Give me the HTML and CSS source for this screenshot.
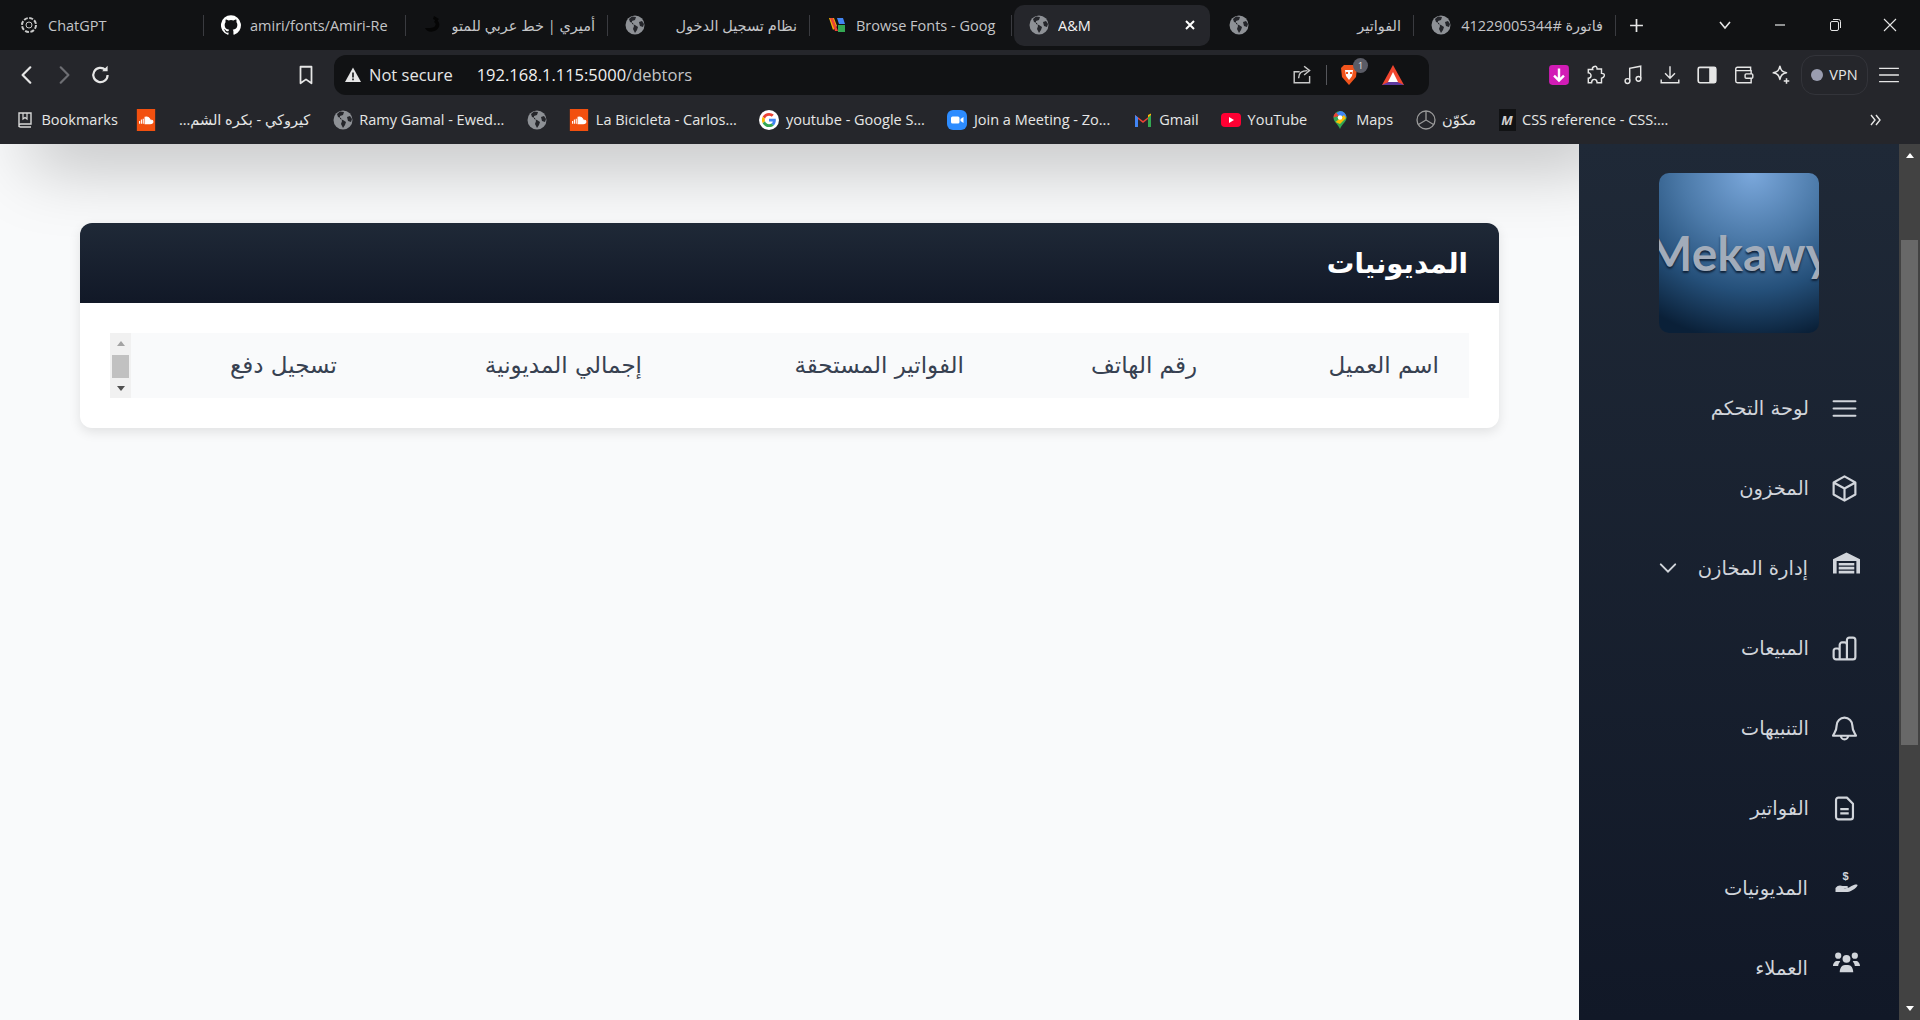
FILE: index.html
```html
<!DOCTYPE html>
<html lang="ar">
<head>
  <meta charset="UTF-8">
  <title>A&amp;M</title>
  <link rel="stylesheet" href="styles.css">
</head>
<body>
  <svg class="defs" width="0" height="0">
    <symbol id="globe" viewBox="0 0 20 20">
      <circle cx="10" cy="10" r="9.500" fill="#8e9196"/>
      <path d="M7 1.500 4 4l1 3 3 1 1 3-1 3 2 4 2-3 1-3-3-2-3-1V6l3-1 1-3zM14 7l3-1 2 3-1 3-3-1z" fill="#25262b"/>
    </symbol>
    <symbol id="cloud" viewBox="0 0 20 24">
      <rect width="20" height="24" fill="#f2500f"/>
      <path d="M3 16v-3M5 16v-4.500M7 16v-5.500M9 16V9c3-1 5 1 5.500 3 2 0 3 1 3 2s-1 2-3 2z" stroke="#fff" stroke-width="1.200" fill="#fff"/>
    </symbol>
  </svg>

  <header class="browser">
    <div class="tabstrip">
      <div class="tab">
        <svg class="fav" viewBox="0 0 20 20"><circle cx="10" cy="10" r="7" fill="none" stroke="#c8c8c8" stroke-width="2" stroke-dasharray="4 1.500"/><circle cx="10" cy="10" r="3" fill="none" stroke="#c8c8c8"/></svg>
        <span class="tab-title">ChatGPT</span>
      </div>
      <div class="tab">
        <svg class="fav" viewBox="0 0 24 24"><path fill="#fff" d="M12 .3a12 12 0 0 0-3.800 23.400c.6.100.8-.3.8-.6v-2c-3.300.7-4-1.600-4-1.600-.5-1.400-1.300-1.800-1.300-1.800-1.100-.7.1-.7.1-.7 1.200.1 1.800 1.200 1.800 1.200 1.100 1.800 2.800 1.300 3.500 1 .1-.8.4-1.300.8-1.600-2.700-.3-5.500-1.300-5.500-5.900 0-1.300.5-2.400 1.200-3.200-.1-.3-.5-1.500.1-3.200 0 0 1-.3 3.300 1.200a11.500 11.500 0 0 1 6 0c2.300-1.500 3.300-1.200 3.300-1.200.6 1.700.2 2.900.1 3.200.8.8 1.200 1.900 1.200 3.200 0 4.600-2.800 5.600-5.500 5.900.4.4.8 1.100.8 2.200v3.300c0 .3.2.7.8.6A12 12 0 0 0 12 .3z"/></svg>
        <span class="tab-title">amiri/fonts/Amiri-Re</span>
      </div>
      <div class="tab">
        <svg class="fav" viewBox="0 0 20 20"><path d="M2 13c2 5 11 5 14-1 1-3 0-6-3-8l-2 3c2 1 2 3 1 4-1 2-5 2-10 2z" fill="#050505"/><path d="M11 1l5 3-2 2-4-2z" fill="#050505"/></svg>
        <span class="tab-title rtl">أميري | خط عربي للمتو</span>
      </div>
      <div class="tab">
        <svg class="fav"><use href="#globe"/></svg>
        <span class="tab-title rtl">نظام تسجيل الدخول</span>
      </div>
      <div class="tab">
        <svg class="fav" viewBox="0 0 20 20"><path d="M2 3h5l3 8-4 4z" fill="#f4b400"/><path d="M3 3h3l5 13H8z" fill="#ea4335"/><path d="M10 3h6l2 6h-6z" fill="#4285f4"/><path d="M11 10h7v7h-7z" fill="#34a853"/></svg>
        <span class="tab-title">Browse Fonts - Goog</span>
      </div>
      <div class="tab tab-active">
        <svg class="fav"><use href="#globe"/></svg>
        <span class="tab-title">A&amp;M</span>
        <svg class="tab-close" viewBox="0 0 12 12"><path d="M2 2l8 8M10 2l-8 8" stroke="#fff" stroke-width="2"/></svg>
      </div>
      <div class="tab">
        <svg class="fav"><use href="#globe"/></svg>
        <span class="tab-title rtl">الفواتير</span>
      </div>
      <div class="tab">
        <svg class="fav"><use href="#globe"/></svg>
        <span class="tab-title rtl">فاتورة #41229005344</span>
      </div>
      <svg class="newtab" viewBox="0 0 14 14"><path d="M7 1v12M1 7h12" stroke="#e6e6e6" stroke-width="1.600"/></svg>
      <div class="winbtns">
        <svg class="winbtn" viewBox="0 0 14 14"><path d="M2 4l5 6 5-6" fill="none" stroke="#e6e6e6" stroke-width="1.600"/></svg>
        <svg class="winbtn" viewBox="0 0 14 14"><path d="M2 7h10" stroke="#e6e6e6" stroke-width="1.200"/></svg>
        <svg class="winbtn" viewBox="0 0 14 14"><rect x="2.500" y="3.500" width="8" height="9" rx="1.500" fill="none" stroke="#e6e6e6"/><path d="M5 1.500h5.500a2 2 0 0 1 2 2V10" fill="none" stroke="#e6e6e6"/></svg>
        <svg class="winbtn" viewBox="0 0 14 14"><path d="M1 1l12 12M13 1L1 13" stroke="#e6e6e6" stroke-width="1.100"/></svg>
      </div>
    </div>

    <div class="toolbar">
      <svg class="nav-ic" viewBox="0 0 20 20"><path d="M13 3l-7 7 7 7" fill="none" stroke="#e6e6e6" stroke-width="2" stroke-linecap="round" stroke-linejoin="round"/></svg>
      <svg class="nav-ic" viewBox="0 0 20 20"><path d="M7 3l7 7-7 7" fill="none" stroke="#6d6e73" stroke-width="2" stroke-linecap="round" stroke-linejoin="round"/></svg>
      <svg class="nav-ic" viewBox="0 0 20 20"><path d="M16 10a6.500 6.500 0 1 1-2-4.700" fill="none" stroke="#e6e6e6" stroke-width="2"/><path d="M11 6.500h5v-5z" fill="#e6e6e6"/></svg>
      <svg class="nav-ic bookmark-ic" viewBox="0 0 20 20"><path d="M5 2.500h10v15l-5-3.500-5 3.500z" fill="none" stroke="#e6e6e6" stroke-width="1.600" stroke-linejoin="round"/></svg>
      <div class="omnibox">
        <svg class="warn-ic" viewBox="0 0 18 18"><path d="M9 1.500l8 14.500H1z" fill="#e6e6e6"/><path d="M8.200 6.500h1.600v5H8.200zM8.200 12.500h1.600v1.700H8.200z" fill="#111214"/></svg>
        <span class="not-secure">Not secure</span>
        <span class="url">192.168.1.115:5000<span class="url-path">/debtors</span></span>
        <svg class="share-ic" viewBox="0 0 20 20"><path d="M16 11v6H2V7h5" fill="none" stroke="#c9c9c9" stroke-width="1.300"/><path d="M6 13c0-5 3-7 8-7M11 2l5 4-5 4" fill="none" stroke="#c9c9c9" stroke-width="1.300"/></svg>
        <span class="omni-sep"></span>
        <span class="shield">
          <svg viewBox="0 0 20 22"><path d="M5 1h10l3 3-1 9-7 8-7-8-1-9z" fill="#f1541d"/><path d="M6 6h8l-1 6-3 4-3-4z" fill="#fff"/><path d="M7 8h2v2H7zM11 8h2v2h-2z" fill="#f1541d"/></svg>
          <span class="shield-count">1</span>
        </span>
        <svg class="rewards-ic" viewBox="0 0 24 22"><path d="M12 1l11 20H1z" fill="#f0452f"/><path d="M1 21l11-5 11 5z" fill="#5f3aa0"/><path d="M12 8l5 10H7z" fill="#fff"/></svg>
      </div>
      <div class="tools">
        <svg class="tool pink" viewBox="0 0 20 20"><rect x="1" y="1" width="18" height="18" rx="3" fill="#d21cb6"/><path d="M10 4v11M5.500 10.500 10 15l4.500-4.500" fill="none" stroke="#fff" stroke-width="2.200"/></svg>
        <svg class="tool" viewBox="0 0 20 20"><path d="M8 2.500c2-1 3 0 3 2h4v4c2 0 3 1 2.500 2.500S15 13 15 13v4h-4c0-2-1-3-2.500-3S6 15 6 17H3v-4c2 0 2.500-1 2.500-2.500S4 8 3 8V5h4c-.5-1 0-2 1-2.500z" fill="none" stroke="#e6e6e6" stroke-width="1.300"/></svg>
        <svg class="tool" viewBox="0 0 20 20"><path d="M7 15V4l10-2v11" fill="none" stroke="#e6e6e6" stroke-width="1.300"/><circle cx="5" cy="15.500" r="2.200" fill="none" stroke="#e6e6e6" stroke-width="1.300"/><circle cx="15" cy="13.500" r="2.200" fill="none" stroke="#e6e6e6" stroke-width="1.300"/></svg>
        <svg class="tool" viewBox="0 0 20 20"><path d="M10 2v11M5.500 8.500 10 13l4.500-4.500M2 14v3h16v-3" fill="none" stroke="#e6e6e6" stroke-width="1.300"/></svg>
        <svg class="tool" viewBox="0 0 20 20"><rect x="2" y="3" width="16" height="14" rx="1.500" fill="none" stroke="#e6e6e6" stroke-width="1.500"/><rect x="12" y="3" width="6" height="14" fill="#e6e6e6"/></svg>
        <svg class="tool" viewBox="0 0 20 20"><path d="M16 6V3H4a1.500 1.500 0 0 0-1.500 1.500v11A1.500 1.500 0 0 0 4 17h12.500V6H3" fill="none" stroke="#e6e6e6" stroke-width="1.300"/><rect x="11" y="9" width="7" height="4" rx="1" fill="#25262b" stroke="#e6e6e6" stroke-width="1.300"/></svg>
        <svg class="tool" viewBox="0 0 20 20"><path d="M9 2c1 4 2 5 6 6-4 1-5 2-6 6-1-4-2-5-6-6 4-1 5-2 6-6z" fill="none" stroke="#e6e6e6" stroke-width="1.400" stroke-linejoin="round"/><path d="M15 13v5M12.500 15.500h5" stroke="#e6e6e6" stroke-width="1.400"/></svg>
        <div class="vpn"><span class="vpn-dot"></span>VPN</div>
        <svg class="tool menu-ic" viewBox="0 0 20 20"><path d="M1 4h18M1 10h18M1 16h18" stroke="#e6e6e6" stroke-width="1.300"/></svg>
      </div>
    </div>

    <div class="bookmarks">
      <span class="bm bm-first">
        <svg class="bm-ic" viewBox="0 0 20 20"><path d="M4 17V3h12v11H5.500a1.500 1.500 0 0 0 0 3H16" fill="none" stroke="#d8d8d8" stroke-width="1.400"/><path d="M8 3v6l2-1.500L12 9V3" fill="none" stroke="#d8d8d8" stroke-width="1.200"/></svg>
        Bookmarks
      </span>
      <span class="bm"><svg class="bm-ic"><use href="#cloud"/></svg></span>
      <span class="bm" dir="rtl">كيروكي - بكره الشم...</span>
      <span class="bm"><svg class="bm-ic"><use href="#globe"/></svg>Ramy Gamal - Ewed...</span>
      <span class="bm"><svg class="bm-ic"><use href="#globe"/></svg></span>
      <span class="bm"><svg class="bm-ic"><use href="#cloud"/></svg>La Bicicleta - Carlos...</span>
      <span class="bm">
        <svg class="bm-ic" viewBox="0 0 48 48"><circle cx="24" cy="24" r="24" fill="#fff"/><g transform="translate(7 7) scale(.71)"><path fill="#EA4335" d="M24 9.500c3.540 0 6.710 1.220 9.210 3.600l6.850-6.850C35.900 2.380 30.470 0 24 0 14.620 0 6.510 5.380 2.560 13.220l7.980 6.190C12.430 13.720 17.740 9.500 24 9.500z"/><path fill="#4285F4" d="M46.980 24.550c0-1.570-.15-3.090-.38-4.550H24v9.020h12.940c-.58 2.960-2.260 5.480-4.780 7.180l7.730 6c4.510-4.180 7.090-10.360 7.090-17.650z"/><path fill="#FBBC05" d="M10.530 28.590c-.48-1.450-.76-2.990-.76-4.590s.27-3.140.76-4.590l-7.980-6.190C.92 16.460 0 20.120 0 24c0 3.880.92 7.540 2.560 10.780l7.970-6.190z"/><path fill="#34A853" d="M24 48c6.480 0 11.930-2.130 15.890-5.810l-7.730-6c-2.150 1.450-4.920 2.300-8.160 2.300-6.260 0-11.570-4.220-13.470-9.910l-7.980 6.190C6.510 42.620 14.620 48 24 48z"/></g></svg>
        youtube - Google S...
      </span>
      <span class="bm">
        <svg class="bm-ic" viewBox="0 0 20 20"><rect width="20" height="20" rx="6" fill="#2d8cff"/><rect x="4" y="6.500" width="8.500" height="7" rx="1.500" fill="#fff"/><path d="M13.500 9l3-2v6l-3-2z" fill="#fff"/></svg>
        Join a Meeting - Zo...
      </span>
      <span class="bm">
        <svg class="bm-ic" viewBox="0 0 20 20"><path d="M2 17V5l8 6 8-6v12h-3V9l-5 4-5-4v8z" fill="#ea4335"/><path d="M2 17V5l3 2.500V17z" fill="#4285f4"/><path d="M18 17V5l-3 2.500V17z" fill="#34a853"/><path d="M15 7.500 18 5V3.500L15 5z" fill="#fbbc05"/></svg>
        Gmail
      </span>
      <span class="bm">
        <svg class="bm-ic" viewBox="0 0 20 20"><rect y="3" width="20" height="14" rx="4" fill="#ff0033"/><path d="M8 7l5 3-5 3z" fill="#fff"/></svg>
        YouTube
      </span>
      <span class="bm">
        <svg class="bm-ic" viewBox="0 0 20 20"><path d="M10 1a6.500 6.500 0 0 0-6.500 6.500C3.500 12 8 14 10 19c2-5 6.500-7 6.500-11.500A6.500 6.500 0 0 0 10 1z" fill="#34a853"/><path d="M10 1a6.500 6.500 0 0 1 6.500 6.500L5 4z" fill="#4285f4"/><path d="M3.500 7.500A6.500 6.500 0 0 1 6 2.500L9 6z" fill="#ea4335"/><path d="M5.500 12 14 5l2 3-6 6z" fill="#fbbc05"/><circle cx="10" cy="7.500" r="2.300" fill="#fff"/></svg>
        Maps
      </span>
      <span class="bm">
        <svg class="bm-ic" viewBox="0 0 20 20"><circle cx="10" cy="10" r="9" fill="none" stroke="#9a9a9a" stroke-width="1.300"/><path d="M10 1v9l7.500 4.500M10 10l-7.500 4.500" fill="none" stroke="#9a9a9a" stroke-width="1.300"/></svg>
        <span dir="rtl">مكوّن</span>
      </span>
      <span class="bm"><span class="bm-m">M</span>CSS reference - CSS:...</span>
      <svg class="bm-more" viewBox="0 0 14 14"><path d="M3 2l4 5-4 5M8 2l4 5-4 5" fill="none" stroke="#e6e6e6" stroke-width="1.400"/></svg>
    </div>
  </header>

  <div class="app">
    <main class="content" dir="rtl">
      <section class="card">
        <h1 class="card-head">المديونيات</h1>
        <div class="card-body">
          <div class="table-wrap">
            <table class="debt-table">
              <thead>
                <tr>
                  <th class="col-name">اسم العميل</th>
                  <th class="col-phone">رقم الهاتف</th>
                  <th class="col-inv">الفواتير المستحقة</th>
                  <th class="col-total">إجمالي المديونية</th>
                  <th>تسجيل دفع</th>
                </tr>
              </thead>
            </table>
            <div class="mini-scroll">
              <span class="arrow-up"></span>
              <span class="mini-thumb"></span>
              <span class="arrow-down"></span>
            </div>
          </div>
        </div>
      </section>
    </main>

    <aside class="sidebar" dir="rtl">
      <div class="logo"><span class="logo-text">Mekawy</span></div>
      <nav class="side-nav">
        <a class="side-link">
          <svg class="side-ic" viewBox="0 0 24 24"><path d="M3 6h18M3 12h18M3 18h18" stroke="currentColor" stroke-width="1.800" stroke-linecap="round"/></svg>
          لوحة التحكم
        </a>
        <a class="side-link">
          <svg class="side-ic" viewBox="0 0 24 24"><path d="M12 2l9 5v10l-9 5-9-5V7zM3 7l9 5 9-5M12 12v10" fill="none" stroke="currentColor" stroke-width="1.800" stroke-linejoin="round"/></svg>
          المخزون
        </a>
        <a class="side-link">
          <svg class="side-ic side-ic-fa" viewBox="0 0 26 20"><path d="M0 6.500 13 0l13 6.500V20h-3.500V8h-19v12H0z" fill="currentColor"/><path d="M5.500 10h15v2.500h-15zM5.500 13.700h15v2.500h-15zM5.500 17.400h15V20h-15z" fill="currentColor"/></svg>
          إدارة المخازن
          <svg class="side-caret" viewBox="0 0 20 20"><path d="M2 6l8 8 8-8" fill="none" stroke="currentColor" stroke-width="2.200" stroke-linecap="round"/></svg>
        </a>
        <a class="side-link">
          <svg class="side-ic" viewBox="0 0 24 24"><path d="M3 14a2 2 0 0 1 2-2h1a2 2 0 0 1 2 2v7H5a2 2 0 0 1-2-2zM8 9a2 2 0 0 1 2-2h2a2 2 0 0 1 2 2v12H8zM14 5a2 2 0 0 1 2-2h3a2 2 0 0 1 2 2v14a2 2 0 0 1-2 2h-5z" fill="none" stroke="currentColor" stroke-width="1.800" stroke-linejoin="round"/></svg>
          المبيعات
        </a>
        <a class="side-link">
          <svg class="side-ic" viewBox="0 0 24 24"><path d="M12 3a6.500 6.500 0 0 0-6.500 6.500c0 4.500-2 6-3 8.500h19c-1-2.500-3-4-3-8.500A6.500 6.500 0 0 0 12 3zM9 18a3 3 0 0 0 6 0" fill="none" stroke="currentColor" stroke-width="1.800" stroke-linejoin="round"/></svg>
          التنبيهات
        </a>
        <a class="side-link">
          <svg class="side-ic" viewBox="0 0 24 24"><path d="M7 3h7l5 5v11a2 2 0 0 1-2 2H7a2 2 0 0 1-2-2V5a2 2 0 0 1 2-2zM8.500 12.500h7M8.500 16h7" fill="none" stroke="currentColor" stroke-width="1.800" stroke-linejoin="round"/></svg>
          الفواتير
        </a>
        <a class="side-link">
          <svg class="side-ic side-ic-fa" viewBox="0 0 26 24"><text x="12" y="9" font-size="11" font-weight="700" font-family="Liberation Sans" text-anchor="middle" fill="currentColor">$</text><path d="M2 17c2-3 5-3 7-2h4c2 0 2 2 0 2h-3c3 .5 5 0 8-2 2-1 5-2 6-1 1 1-6 7-10 7H2z" fill="currentColor"/></svg>
          المديونيات
        </a>
        <a class="side-link">
          <svg class="side-ic side-ic-fa" viewBox="0 0 26 22"><g fill="currentColor"><circle cx="5" cy="4" r="3"/><circle cx="21" cy="4" r="3"/><circle cx="13" cy="7" r="3.800"/><path d="M0 14c0-3 2-5 4-5h3c-1 2-2 3-2 5zM26 14c0-3-2-5-4-5h-3c1 2 2 3 2 5zM6.500 20c0-4 2-7 5-7h3c3 0 5 3 5 7z"/></g></svg>
          العملاء
        </a>
      </nav>
    </aside>

    <div class="page-scroll">
      <span class="arrow-up arrow-white"></span>
      <span class="page-thumb"></span>
      <span class="arrow-down arrow-white"></span>
    </div>
  </div>
</body>
</html>
```

FILE: styles.css
```css
* {
  box-sizing: border-box;
}
html, body {
  margin: 0;
  height: 100%;
  overflow: hidden;
}
body {
  font-family: "DejaVu Sans", "Noto Sans", sans-serif;
  background: #f9fafb;
}
.defs {
  position: absolute;
}

/* browser chrome */
.browser {
  font-family: "Open Sans", "DejaVu Sans", sans-serif;
  color: #e6e6e6;
  height: 144px;
  background: #25262b;
}
.tabstrip {
  height: 50px;
  background: #111214;
  display: flex;
  align-items: center;
  padding-left: 2px;
}
.tab {
  width: 202px;
  height: 41px;
  flex: none;
  display: flex;
  align-items: center;
  gap: 9px;
  padding: 0 13px 0 17px;
  position: relative;
  overflow: hidden;
}
.tab::after {
  content: "";
  position: absolute;
  right: 0;
  top: 10px;
  bottom: 10px;
  width: 1px;
  background: #3a3b40;
}
.tab-active {
  background: #25262b;
  border-radius: 10px;
  width: 196px;
  margin: 0 2px;
  padding: 0 14px 0 15px;
}
.tab-active::after {
  display: none;
}
.fav {
  width: 20px;
  height: 20px;
  flex: none;
}
.tab-title {
  flex: 1;
  font-size: 14.500px;
  white-space: nowrap;
  overflow: hidden;
  color: #c4c5c8;
}
.tab-active .tab-title {
  color: #f2f2f2;
}
.rtl {
  direction: rtl;
  text-align: right;
}
.tab-close {
  width: 12px;
  height: 12px;
  flex: none;
}
.newtab {
  width: 15px;
  height: 15px;
  flex: none;
  margin-left: 13px;
}
.winbtns {
  margin-left: auto;
  display: flex;
  gap: 38px;
  padding-right: 23px;
}
.winbtn {
  width: 14px;
  height: 14px;
  margin-left: 3px;
}

.toolbar {
  height: 49px;
  display: flex;
  align-items: center;
  padding-left: 16px;
}
.nav-ic {
  width: 22px;
  height: 22px;
  margin-right: 15px;
  flex: none;
}
.bookmark-ic {
  margin: 0 17px 0 168px;
}
.omnibox {
  width: 1095px;
  height: 40px;
  flex: none;
  background: #111214;
  border-radius: 12px;
  display: flex;
  align-items: center;
  padding: 0 24px 0 10px;
  font-size: 16.500px;
}
.warn-ic {
  width: 18px;
  height: 18px;
  margin-right: 7px;
}
.not-secure {
  margin-right: 24px;
}
.url {
  color: #f0f0f0;
}
.url-path {
  color: #c4c5c8;
}
.share-ic {
  width: 22px;
  height: 22px;
  margin-left: auto;
}
.omni-sep {
  width: 1px;
  height: 20px;
  background: #55565b;
  margin: 0 12px;
}
.shield {
  position: relative;
  width: 20px;
  height: 24px;
  margin-right: 22px;
}
.shield svg {
  width: 20px;
  height: 24px;
}
.shield-count {
  position: absolute;
  top: -5px;
  right: -9px;
  width: 15px;
  height: 15px;
  border-radius: 50%;
  background: #5b5c66;
  font-size: 9px;
  line-height: 15px;
  text-align: center;
}
.rewards-ic {
  width: 24px;
  height: 22px;
}
.tools {
  display: flex;
  align-items: center;
  margin-left: 119px;
}
.tool {
  width: 22px;
  height: 22px;
  margin-right: 15px;
  flex: none;
}
.vpn {
  width: 67px;
  height: 40px;
  margin: 0 10px 0 -6px;
  border: 1px solid #33343a;
  border-radius: 14px;
  display: flex;
  align-items: center;
  justify-content: center;
  gap: 6px;
  font-size: 14.500px;
}
.vpn-dot {
  width: 12px;
  height: 12px;
  border-radius: 50%;
  background: #9a9db0;
}
.menu-ic {
  margin: 0;
}

.bookmarks {
  height: 45px;
  display: flex;
  align-items: center;
  padding: 0 0 4px 15px;
  font-size: 14.500px;
  gap: 22.500px;
}
.bm {
  display: flex;
  align-items: center;
  gap: 6.500px;
  white-space: nowrap;
}
.bm-first {
  margin-right: -4px;
}
.bm-ic {
  width: 20px;
  height: 22px;
  flex: none;
}
.bm-m {
  width: 17px;
  height: 22px;
  background: #111214;
  font-style: italic;
  font-weight: 700;
  font-size: 13px;
  line-height: 22px;
  text-align: center;
  color: #cfcfcf;
}
.bm-more {
  width: 14px;
  height: 14px;
  margin-left: auto;
  margin-right: 38px;
}

/* page */
.app {
  height: calc(100vh - 144px);
  display: flex;
}
.content {
  flex: 1;
  position: relative;
  padding: 79px 80px 0;
  overflow: hidden;
  background: #f9fafb;
}
.content::before {
  content: "";
  position: absolute;
  top: -60px;
  left: 30px;
  right: -30px;
  height: 60px;
  box-shadow: 0 20px 70px rgba(0, 0, 0, 0.26);
}
.card {
  position: relative;
  background: #fff;
  border-radius: 12px;
  overflow: hidden;
  box-shadow: 0 4px 12px rgba(0, 0, 0, 0.1);
}
.card-head {
  margin: 0;
  height: 80px;
  padding: 0 31px;
  display: flex;
  align-items: center;
  font-size: 27.500px;
  font-weight: 700;
  color: #fff;
  background: linear-gradient(180deg, #1f2937, #111827);
}
.card-body {
  padding: 30px;
}
.table-wrap {
  display: flex;
  height: 65px;
  background: #f9fafb;
}
.debt-table {
  flex: 1;
  border-collapse: collapse;
  height: 65px;
  table-layout: fixed;
}
.debt-table th {
  padding: 0 30px 2px;
  text-align: right;
  font-size: 23px;
  font-weight: 400;
  color: #374151;
  white-space: nowrap;
}
.col-name {
  width: 242px;
}
.col-phone {
  width: 233px;
}
.col-inv {
  width: 322px;
}
.col-total {
  width: 305px;
}
.mini-scroll {
  width: 21px;
  background: #f1f1f1;
  display: flex;
  flex-direction: column;
  align-items: center;
  padding: 8px 0 7px;
  justify-content: space-between;
}
.mini-thumb {
  width: 17px;
  height: 23px;
  background: #c1c1c1;
}
.arrow-up, .arrow-down {
  width: 0;
  height: 0;
  border-left: 4.500px solid transparent;
  border-right: 4.500px solid transparent;
}
.arrow-up {
  border-bottom: 5px solid #a3a3a3;
}
.arrow-down {
  border-top: 5px solid #505050;
}

.sidebar {
  width: 320px;
  flex: none;
  padding-top: 29px;
  background: linear-gradient(180deg, #1f2937, #111827);
  overflow: hidden;
  position: relative;
}
.logo {
  width: 160px;
  height: 160px;
  margin: 0 auto;
  border-radius: 10px;
  overflow: hidden;
  display: flex;
  align-items: center;
  justify-content: center;
  background: radial-gradient(ellipse 110% 105% at 58% 0, #7ba8dc 0, #4b79a8 40%, #25507a 70%, #0a2038 100%);
  direction: ltr;
}
.logo-text {
  font-family: "Lato", sans-serif;
  font-weight: 700;
  font-size: 48px;
  color: #a2acba;
  text-shadow: 0 2px 2px #10233a;
  white-space: nowrap;
  margin-top: -1px;
}
.side-nav {
  margin-top: 35px;
}
.side-link {
  height: 80px;
  display: flex;
  align-items: center;
  gap: 21px;
  padding-right: 40px;
  font-size: 19.500px;
  color: #d1d5db;
}
.side-ic {
  width: 29px;
  height: 29px;
  flex: none;
}
.side-ic-fa {
  width: 27px;
  height: 24px;
  margin: -10px -1px 0 4px;
}
.side-caret {
  width: 18px;
  height: 18px;
  margin-right: 0;
}

.page-scroll {
  width: 21px;
  flex: none;
  background: #424242;
  position: relative;
  display: flex;
  flex-direction: column;
  align-items: center;
  justify-content: space-between;
  padding: 9px 0;
}
.arrow-white.arrow-up {
  border-bottom-color: #fff;
}
.arrow-white.arrow-down {
  border-top-color: #fff;
}
.page-thumb {
  position: absolute;
  top: 96px;
  left: 2px;
  width: 17px;
  height: 505px;
  background: #686868;
}
```
